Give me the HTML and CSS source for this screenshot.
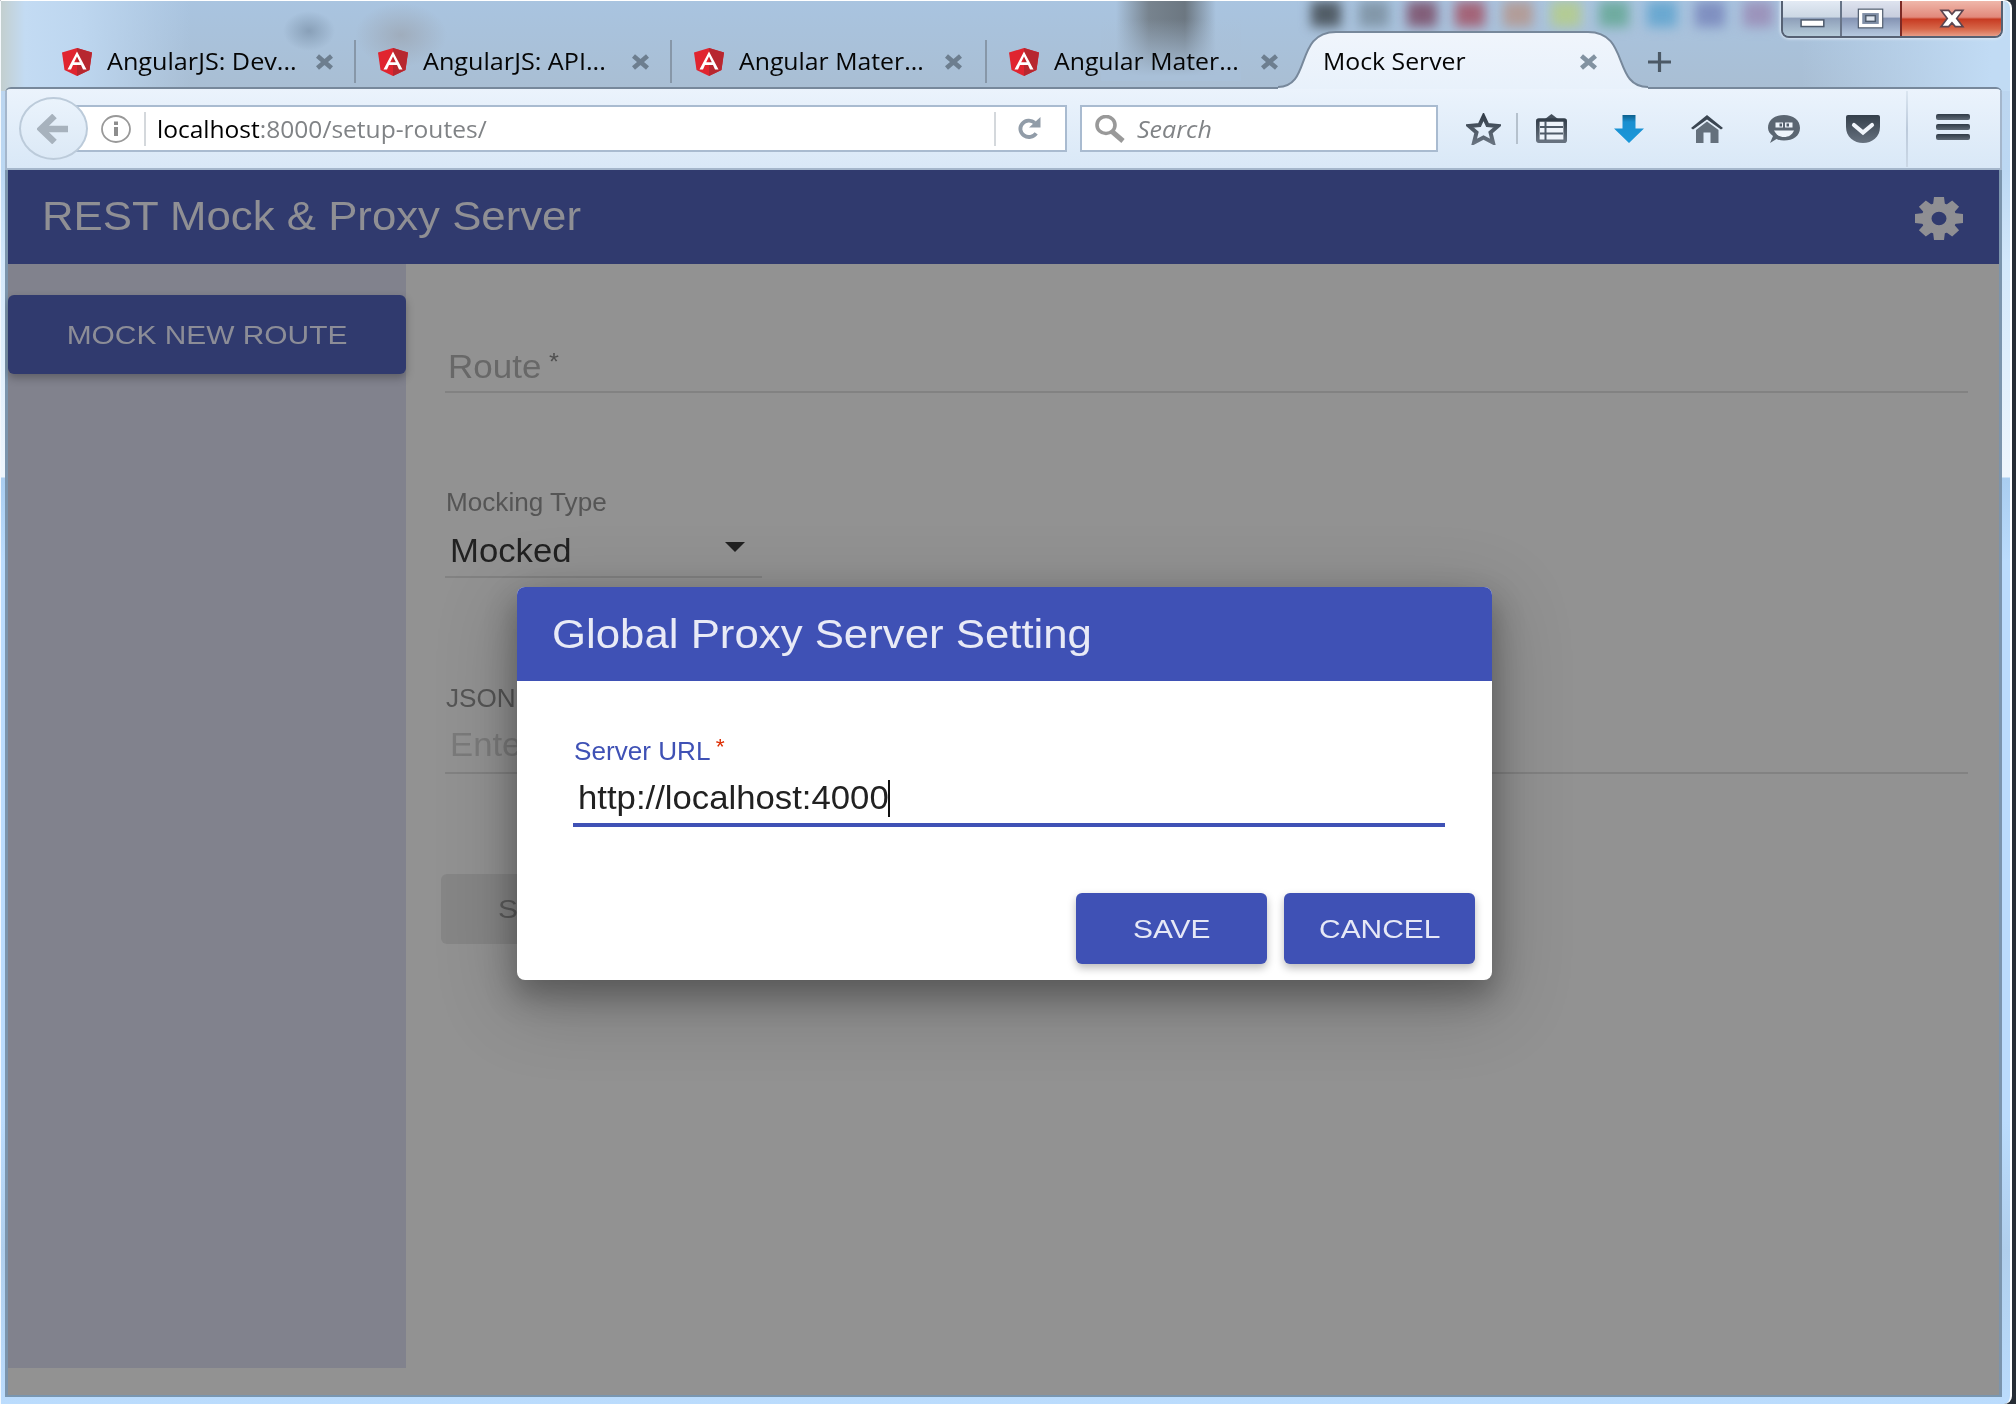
FILE: index.html
```
<!DOCTYPE html>
<html lang="en">
<head>
<meta charset="utf-8">
<title>Mock Server</title>
<link rel="stylesheet" href="styles.css">
</head>
<body>
<svg width="0" height="0" class="defs">
  <defs>
    <linearGradient id="ink" x1="0" y1="0" x2="0" y2="1"><stop offset="0" stop-color="#343f4b"/><stop offset="1" stop-color="#67727f"/></linearGradient>
    <linearGradient id="sky" x1="0" y1="0" x2="0" y2="1"><stop offset="0" stop-color="#0c5f8c"/><stop offset=".25" stop-color="#1a8fd0"/><stop offset="1" stop-color="#1b98da"/></linearGradient>
    <linearGradient id="tabfill" x1="0" y1="0" x2="0" y2="1"><stop offset="0" stop-color="#f0f5fc"/><stop offset="1" stop-color="#e8f1fb"/></linearGradient>
    <symbol id="angular" viewBox="0 0 30 28" preserveAspectRatio="none">
      <path d="M15 0 30 4.500 27.500 22 15 28 2.500 22 0 4.500z" fill="#e0242f"/>
      <path d="M15 0 30 4.500 27.500 22 15 28z" fill="#b7272f"/>
      <path d="M15 3.500 5.500 21.500H9l2-4.500h8l2 4.500h3.500zM15 8.500l2.800 5.800h-5.600z" fill="#fff" fill-rule="evenodd"/>
    </symbol>
    <symbol id="close" viewBox="0 0 19 16" preserveAspectRatio="none"><path d="M2.500 2 16.500 14M16.500 2 2.500 14" stroke="currentColor" stroke-width="4.600"/></symbol>
  </defs>
</svg>

<div class="window">
  <div class="swatches"><i></i><i></i><i></i><i></i><i></i><i></i><i></i><i></i><i></i><i></i></div>
  <div class="tabs">
    <div class="tab"><svg class="fav"><use href="#angular"/></svg><span class="label wide">AngularJS: Dev...</span><svg class="x"><use href="#close"/></svg></div>
    <div class="tab"><svg class="fav"><use href="#angular"/></svg><span class="label wide">AngularJS: API...</span><svg class="x"><use href="#close"/></svg></div>
    <div class="tab"><svg class="fav"><use href="#angular"/></svg><span class="label">Angular Mater...</span><svg class="x"><use href="#close"/></svg></div>
    <div class="tab last"><svg class="fav"><use href="#angular"/></svg><span class="label">Angular Mater...</span><svg class="x"><use href="#close"/></svg></div>
    <div class="tab active">
      <svg class="shape" viewBox="0 0 370 58"><path d="M0 56C34 56 16 1 58 1H310C352 1 334 56 370 56V58H0z" fill="url(#tabfill)"/><path d="M0 56C34 56 16 1 58 1H310C352 1 334 56 370 56" fill="none" stroke="#77889b" stroke-width="2"/></svg>
      <span class="label">Mock Server</span><svg class="x"><use href="#close"/></svg>
    </div>
    <svg class="plus" viewBox="0 0 23 20"><path d="M0 10H23M11.500 0V20" stroke="#4c5966" stroke-width="3.200"/></svg>
  </div>

  <div class="controls">
    <div class="min"><svg viewBox="0 0 60 37"><rect x="19" y="20" width="24" height="7" fill="#fff" stroke="#4d5a6c" stroke-width="1.600"/></svg></div>
    <div class="max"><svg viewBox="0 0 58 37"><rect x="18" y="11" width="21" height="15" fill="none" stroke="#4d5a6c" stroke-width="6"/><rect x="18" y="11" width="21" height="15" fill="#7f8ea6" stroke="#fff" stroke-width="3.500"/><rect x="23.500" y="15.500" width="10" height="6" fill="#dfe6ef" stroke="#4d5a6c" stroke-width="1.500"/></svg></div>
    <div class="quit"><svg viewBox="0 0 102 37"><path d="M40 10h8l3.500 4 3.500-4h8l-6.500 8.500 6.500 8.500h-8l-3.500-4-3.500 4h-8l6.500-8.500z" fill="#fff" stroke="#5b4550" stroke-width="1.800"/></svg></div>
  </div>

  <div class="client">
    <div class="toolbar">
      <div class="back"><svg viewBox="0 0 32 30"><path d="M17.500 2 4 15 17.500 28M4 15H31" fill="none" stroke="#a7b2bd" stroke-width="6.500"/></svg></div>
      <div class="urlbar">
        <svg class="info" viewBox="0 0 30 28"><ellipse cx="15" cy="14" rx="14" ry="13" fill="none" stroke="#999" stroke-width="1.800"/><path d="M15 6.500v3.500M15 12v9" stroke="#8d8d8d" stroke-width="4"/></svg>
        <span class="bar"></span>
        <span class="url"><b>localhost</b>:8000/setup-routes/</span>
        <span class="bar end"></span>
        <svg class="reload" viewBox="0 0 24 24"><path d="M19.500 17A9 8.500 0 1 1 18 6" fill="none" stroke="#919ca8" stroke-width="4"/><path d="M24 0V11H12z" fill="#919ca8"/></svg>
      </div>
      <div class="search">
        <svg viewBox="0 0 30 28"><ellipse cx="11" cy="10" rx="9" ry="8.500" fill="none" stroke="#999" stroke-width="3.600"/><path d="M17 16.500 28 26" stroke="#999" stroke-width="5"/></svg>
        <span>Search</span>
      </div>
      <svg class="star" viewBox="0 0 35 32"><path d="M17.500 3.500 21.500 12 32 13 24.500 19.500 27 29.500 17.500 24.500 8 29.500 10.500 19.500 3 13 13.500 12z" fill="none" stroke="url(#ink)" stroke-width="4"/></svg>
      <span class="tick"></span>
      <svg class="clip" viewBox="0 0 31 29"><path d="M9 5 15.500 0 22 5V7H9z" fill="#46515d"/><rect x="1.800" y="6" width="27.400" height="21.200" rx="1" fill="#eef4fb" stroke="url(#ink)" stroke-width="3.600"/><path d="M4 13H27M4 19.500H27M9.500 7V26" stroke="#4f5b68" stroke-width="2"/></svg>
      <svg class="down" viewBox="0 0 30 28"><path d="M8.500 0H21.500V13.500H30L15 28 0 13.500H8.500z" fill="url(#sky)"/></svg>
      <svg class="home" viewBox="0 0 34 28"><path d="M17 0 33 13 31 14.500 17 4.500 3 14.500 1 13z" fill="#3b4652"/><path d="M17 6.500 28.500 15V28H20.500V17.500H13.500V28H6V15z" fill="#64707c"/></svg>
      <svg class="chat" viewBox="0 0 32 28"><path d="M16 0C25 0 32 5 32 13S25 25.500 16 25.500C13 25.500 10.500 25 8.500 24L2 28 5 21C2 19 0 16 0 13 0 5 7 0 16 0z" fill="#5b6672"/><path d="M6 15.500H26C24 20 20.500 22 16 22S8.500 20 6 15.500z" fill="#eef4fb"/><path d="M7.500 7.500H15V12.500H7.500zM17 7.500H24.500V12.500H17z" fill="#eef4fb"/><path d="M11.500 8.500h2.500v3h-2.500zM18.500 8.500h2.500v3h-2.500z" fill="#4f5b68"/></svg>
      <svg class="pocket" viewBox="0 0 34 28"><path d="M2 0H32Q34 0 34 2V12C34 22 26 28 17 28S0 22 0 12V2Q0 0 2 0z" fill="url(#ink)"/><path d="M8 10 17 17.500 26 10" fill="none" stroke="#f0f5fb" stroke-width="4.200" stroke-linecap="round"/></svg>
      <span class="tall"></span>
      <span class="burger"><i></i><i></i><i></i></span>
    </div>

    <div class="page">
      <header class="appbar">
        <h1 class="title">REST Mock &amp; Proxy Server</h1>
        <svg class="gear" viewBox="-24 -21.500 48 43" preserveAspectRatio="none"><g transform="scale(1 .9)" fill="#8f8f93"><path fill-rule="evenodd" d="M0-17.500A17.500 17.500 0 1 1 0 17.500 17.500 17.500 0 1 1 0-17.500zM0-7.500A7.500 7.500 0 1 0 0 7.500 7.500 7.500 0 1 0 0-7.500z"/><g id="teeth"><path d="M-6-15-5-24H5L6-15zM-6 15-5 24H5L6 15zM-15-6-24-5V5L-15 6zM15-6 24-5V5L15 6z"/></g><use href="#teeth" transform="rotate(45) scale(.98)"/></g></svg>
      </header>
      <div class="body">
        <aside class="side"><div class="btn dim"><span class="cap">MOCK NEW ROUTE</span></div></aside>
        <main class="form">
          <div class="field route"><span class="value">Route <small>*</small></span></div>
          <div class="field kind"><span class="hint">Mocking Type</span><span class="pick"><span class="value">Mocked</span><svg viewBox="0 0 20 10"><path d="M0 0H20L10 10z" fill="#212121"/></svg></span></div>
          <div class="field json"><span class="hint">JSON</span><span class="value">Enter</span></div>
          <div class="btn off"><span class="cap">SAVE</span></div>
        </main>
      </div>
    </div>
  </div>

  <section class="dialog">
    <header class="dialog-head"><h2 class="title">Global Proxy Server Setting</h2></header>
    <div class="dialog-body">
      <div class="field focus"><span class="hint">Server URL <small>*</small></span><span class="entry"><span class="value">http://localhost:4000</span><i class="caret"></i></span></div>
    </div>
    <div class="actions"><div class="btn"><span class="cap">SAVE</span></div><div class="btn"><span class="cap">CANCEL</span></div></div>
  </section>
</div>
</body>
</html>
```
FILE: styles.css
```
* { box-sizing: border-box; }
body { margin: 0; width: 2016px; height: 1404px; overflow: hidden; background: #262c34; font-family: "Liberation Sans", Arial, sans-serif; }
svg { display: block; flex: none; }
.defs { position: absolute; }
h1, h2 { margin: 0; font-weight: 400; }

/* Glass window frame */
.window {
  position: relative; width: 2012px; height: 1404px; padding: 0 8px 0 4px; display: flex; flex-direction: column;
  border-top: 1px solid #fff; border-right: 2px solid #fdfeff; border-left: 1px solid #f4f8fc; border-radius: 0 8px 8px 0; overflow: hidden;
  background:
    radial-gradient(ellipse 26px 20px at 308px 30px, rgba(110, 132, 155, .55), transparent 100%),
    radial-gradient(ellipse 46px 32px at 400px 34px, rgba(150, 152, 158, .5), transparent 100%),
    linear-gradient(transparent 0, transparent 18px, #a9c0d8 75px) 1100px 0 / 140px 80px no-repeat,
    linear-gradient(90deg, transparent 1115px, #77838e 1148px, #6c7781 1184px, transparent 1215px) 0 0 / 100% 80px no-repeat,
    linear-gradient(90deg, #c3cfcf 0, #c3dbf3 24px, #bdd6ef 80px, transparent 190px) 0 0 / 100% 90px no-repeat,
    linear-gradient(90deg, transparent 1800px, #c1dbf4 1990px) 0 0 / 100% 90px no-repeat,
    linear-gradient(#a9c4e0, #a9bed3) 0 0 / 100% 90px no-repeat,
    linear-gradient(#bcd3ec 0, #bcd8f3 170px, #d3e8fb 260px, #eef6fd 476px, #a9cdf0 477px, #bbdcfd 560px, #bbdcfd 1120px, #b0cfed 1250px, #bbdcfd 1404px);
}
.swatches { position: absolute; left: 1310px; top: 0; display: flex; gap: 18px; filter: blur(6px); }
.swatches i { width: 30px; height: 26px; background: #515c66; }
.swatches i:nth-child(2) { background: #8297a9; }
.swatches i:nth-child(3) { background: #815d78; }
.swatches i:nth-child(4) { background: #a36377; }
.swatches i:nth-child(5) { background: #b29c98; }
.swatches i:nth-child(6) { background: #b3cb94; }
.swatches i:nth-child(7) { background: #6fab9f; }
.swatches i:nth-child(8) { background: #6aa8d0; }
.swatches i:nth-child(9) { background: #7f8fc0; }
.swatches i:nth-child(10) { background: #9b93bb; }

/* Tab strip */
.tabs { display: flex; height: 86px; flex: none; padding: 39px 0 4px 35px; font: 23px/43px "Open Sans", sans-serif; color: #050505; }
.tab { position: relative; display: flex; align-items: center; width: 316px; padding-left: 22px; border-right: 2px solid #8797a8; }
.tab:nth-child(3) { width: 315px; }
.tab.last { width: 292px; border: 0; }
.tab.active { width: 368px; border: 0; padding-left: 44px; }
.fav { width: 30px; height: 28px; }
.label { position: relative; width: 186px; margin-left: 15px; white-space: nowrap; transform: scaleX(1.078); transform-origin: left; }
.label.wide { transform: scaleX(1.095); }
.x { position: relative; width: 19px; height: 16px; margin-left: 22px; color: #6d7e8f; }
.tab:nth-child(3) .x { margin-left: 19px; }
.active .label { margin-left: 0; width: 238px; }
.active .x { margin-left: 18px; color: #8292a1; }
.shape { position: absolute; left: -1px; top: -9px; width: 370px; height: 58px; z-index: 1; }
.active .label, .active .x { z-index: 2; }
.plus { width: 23px; height: 20px; margin: 12px 0 0 1px; }

/* Caption buttons */
.controls { position: absolute; left: 1780px; top: 0; display: flex; width: 222px; height: 37px; border: 2px solid #566173; border-top: 0; border-radius: 0 0 8px 8px; overflow: hidden; box-shadow: 0 0 3px 1px #dfeaf5; }
.controls svg { width: 100%; height: 100%; }
.min { width: 59px; border-right: 2px solid #687488; background: linear-gradient(#e3eaf4 0, #ccd8e4 45%, #8e9fb9 50%, #b5cbd9); }
.max { width: 58px; background: linear-gradient(#dee3ef 0, #c8cede 45%, #8594b4 50%, #b6c9df); }
.quit { flex: 1; border-left: 2px solid #7c2a25; background: linear-gradient(#efb7aa 0, #e2897b 46%, #c73b22 52%, #d76749 80%, #e79c86); }

/* Navigation toolbar */
.client { flex: none; height: 1310px; border: 2px solid #77889b; border-width: 2px 0 2px; border-bottom-color: #7996b0; border-radius: 6px 6px 0 0; overflow: hidden; }
.toolbar { display: flex; align-items: center; height: 81px; border: 2px solid #a4b6cb; border-width: 0 2px 2px; background: linear-gradient(#ebf3fc, #d9e8f7); padding-left: 12px; }
.back { display: flex; align-items: center; justify-content: center; flex: none; width: 69px; height: 63px; border: 2px solid #bccbda; border-radius: 50%; background: linear-gradient(#eaf3fc, #dce9f6); z-index: 1; margin-right: -12px; }
.back svg { width: 32px; height: 30px; margin-right: 2px; }
.urlbar, .search { display: flex; align-items: center; flex: none; height: 47px; border: 2px solid #a9bbd0; background: #fff; }
.urlbar { width: 991px; padding-left: 23px; }
.info { width: 30px; height: 28px; }
.bar { width: 2px; height: 34px; background: #d4d8dc; margin-left: 13px; }
.url, .search span { font: 23px/40px "Open Sans", sans-serif; color: #808386; white-space: nowrap; transform: scaleX(1.067); transform-origin: left; }
.url { width: 310px; margin-left: 11px; }
.url b { font-weight: 400; color: #000; }
.bar.end { margin-left: 527px; }
.reload { width: 24px; height: 23px; margin-left: 21px; }
.search { width: 358px; margin-left: 13px; padding-left: 13px; }
.search svg { width: 30px; height: 28px; }
.search span { font-style: italic; margin-left: 12px; transform: scaleX(1.087); }
.star { width: 35px; height: 32px; margin-left: 28px; }
.tick { width: 2px; height: 31px; background: #b5c1cd; margin-left: 15px; }
.clip { width: 31px; height: 29px; margin-left: 18px; }
.down { width: 30px; height: 28px; margin-left: 47px; }
.home { width: 34px; height: 28px; margin-left: 46px; }
.chat { width: 32px; height: 28px; margin-left: 44px; }
.pocket { width: 34px; height: 28px; margin-left: 46px; }
.tall { width: 2px; height: 76px; background: linear-gradient(#dbe6f1, #bccadb 50%, #cbd8e6); margin-left: 26px; }
.burger { display: flex; flex-direction: column; gap: 4px; margin: -3px 0 0 28px; }
.burger i { width: 34px; height: 6px; border-radius: 2px; background: linear-gradient(#303b47, #5f6a76); }

/* Application page, dimmed behind the dialog */
.page { height: 1225px; border: 3px solid #7b94ac; border-width: 0 3px; background: #929292; display: flex; flex-direction: column; }
.appbar { display: flex; align-items: center; justify-content: space-between; height: 94px; flex: none; padding: 0 36px 0 34px; background: #303a6e; color: #8f8f94; }
.title { font-size: 40px; line-height: 48px; white-space: nowrap; transform: scaleX(1.094); transform-origin: left; }
.appbar .title { margin-top: -2px; }
.gear { width: 48px; height: 43px; margin-top: 3px; }
.body { display: flex; flex: 1; }
.side { width: 398px; height: 1104px; padding-top: 31px; background: #81828d; }
.btn { display: flex; align-items: center; justify-content: center; width: 191px; height: 71px; border-radius: 6px; background: #3f51b5; color: #e6e8f6; box-shadow: 0 4px 8px rgba(0, 0, 0, .27); }
.cap { font-size: 26px; transform: scaleX(1.15); white-space: nowrap; padding-top: 1px; }
.btn.dim { width: 398px; height: 79px; background: #303a6e; color: #8c8d97; }
.btn.off { height: 70px; margin: 100px 0 0 -4px; background: #868686; color: #5c5c5c; box-shadow: none; }
.form { flex: 1; padding: 0 31px 0 39px; }
.field { display: flex; flex-direction: column; align-items: flex-start; border-bottom: 2px solid #828282; }
.value, .hint { white-space: nowrap; transform-origin: left; }
.value { font-size: 33px; line-height: 40px; transform: scaleX(1.052); color: #212121; margin-left: 5px; }
.hint { font-size: 25px; line-height: 30px; transform: scaleX(1.045); color: #555; margin-left: 1px; }
.field small { display: inline-block; font-size: 24px; line-height: 20px; transform: translate(-2px, -8px); }
.route { padding: 83px 0 4px; }
.route .value { margin-left: 3px; color: #686868; transform: scaleX(1.06); }
.route small { color: #505050; }
.kind { width: 317px; margin-top: 94px; padding-bottom: 5px; }
.kind .pick { display: flex; justify-content: space-between; align-items: center; width: 300px; margin-top: 14px; }
.pick svg { width: 20px; height: 10px; margin-top: -8px; }
.json { margin-top: 105px; padding-bottom: 7px; }
.json .value { margin-top: 12px; color: #7b7b7b; }

/* Dialog */
.dialog { position: absolute; left: 516px; top: 586px; width: 975px; height: 393px; display: flex; flex-direction: column; border-radius: 8px; background: #fff; box-shadow: 0 14px 30px 2px rgba(0, 0, 0, .27), 0 20px 76px 8px rgba(0, 0, 0, .2); z-index: 5; }
.dialog-head { display: flex; align-items: center; height: 94px; padding-left: 35px; border-radius: 8px 8px 0 0; background: #3f51b5; color: #e8eaf6; }
.dialog-body { padding: 55px 47px 0 56px; }
.focus { border-bottom: 4px solid #3f51b5; padding-bottom: 5px; }
.focus .hint { color: #3f51b5; }
.focus small { color: #dd2c00; font-size: 22px; transform: translate(-1px, -6px); }
.entry { display: flex; align-items: center; margin-top: 12px; }
.entry .value { width: 311px; }
.caret { width: 2px; height: 37px; background: #111; margin-left: -1px; }
.actions { display: flex; justify-content: flex-end; gap: 17px; margin-top: 66px; padding-right: 17px; }
```
